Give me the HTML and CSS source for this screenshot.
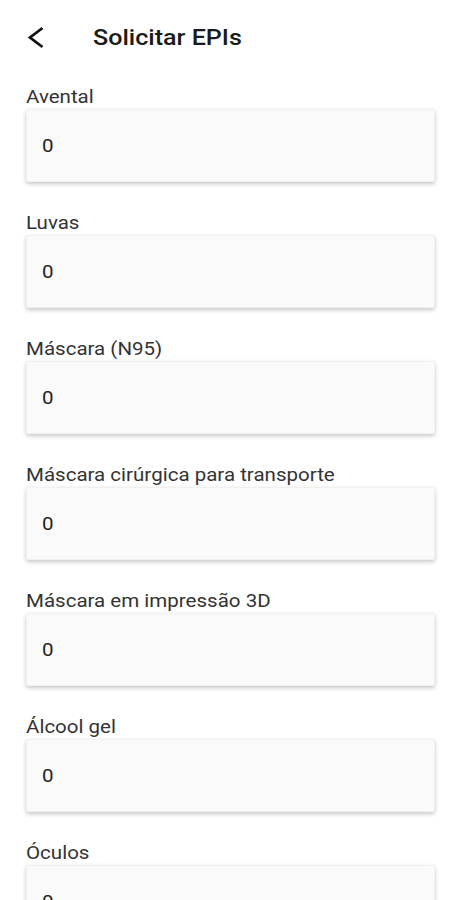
FILE: index.html
```html
<html>
<head>
    <title>Solicitar EPIs</title>
    <link rel="stylesheet" href="styles.css">
</head>
<body>
    <div class="topo">
        <svg class="voltar" width="24" height="24" viewBox="0 0 24 24">
            <path d="M18.5 3 L6 12.5 L18.5 22" fill="none" stroke="#111" stroke-width="2.8"/>
        </svg>
        <h1><span class="largo">Solicitar EPIs</span></h1>
    </div>
    <form class="lista">
        <div class="campo">
            <label><span class="largo">Avental</span></label>
            <div class="caixa"><span class="largo">0</span></div>
        </div>
        <div class="campo">
            <label><span class="largo">Luvas</span></label>
            <div class="caixa"><span class="largo">0</span></div>
        </div>
        <div class="campo">
            <label><span class="largo">Máscara (N95)</span></label>
            <div class="caixa"><span class="largo">0</span></div>
        </div>
        <div class="campo">
            <label><span class="largo">Máscara cirúrgica para transporte</span></label>
            <div class="caixa"><span class="largo">0</span></div>
        </div>
        <div class="campo">
            <label><span class="largo">Máscara em impressão 3D</span></label>
            <div class="caixa"><span class="largo">0</span></div>
        </div>
        <div class="campo">
            <label><span class="largo">Álcool gel</span></label>
            <div class="caixa"><span class="largo">0</span></div>
        </div>
        <div class="campo">
            <label><span class="largo">Óculos</span></label>
            <div class="caixa"><span class="largo">0</span></div>
        </div>
    </form>
</body>
</html>
```

FILE: styles.css
```css
body {
    margin: 0;
    font-family: Roboto, "Liberation Sans", sans-serif;
    background-color: #fff;
    color: #222;
    overflow: hidden;
}

/* o texto da tela original aparece mais largo que o Roboto normal */
.largo {
    display: inline-block;
    transform: scaleX(1.14);
    transform-origin: left center;
    white-space: nowrap;
}

.topo {
    display: flex;
    align-items: center;
    height: 74px;
    padding-left: 24px;
}

.voltar {
    margin-right: 45px;
}

h1 {
    margin: 0;
    font-size: 22px;
    font-weight: 500;
    color: #1a1a1a;
}

.lista {
    display: flex;
    flex-direction: column;
    gap: 30px;
    padding: 12px 26px 0 26px;
    margin: 0;
}

label {
    display: block;
    font-size: 18px;
    line-height: 22px;
    margin-bottom: 1px;
    color: #333;
}

.caixa {
    height: 73px;
    box-sizing: border-box;
    padding-left: 15px;
    display: flex;
    align-items: center;
    font-size: 18px;
    color: #222;
    background-color: #fafafa;
    border: 1px solid #f0f0f0;
    border-radius: 2px;
    box-shadow: 0 2px 4px rgba(0, 0, 0, 0.22);
}
```
